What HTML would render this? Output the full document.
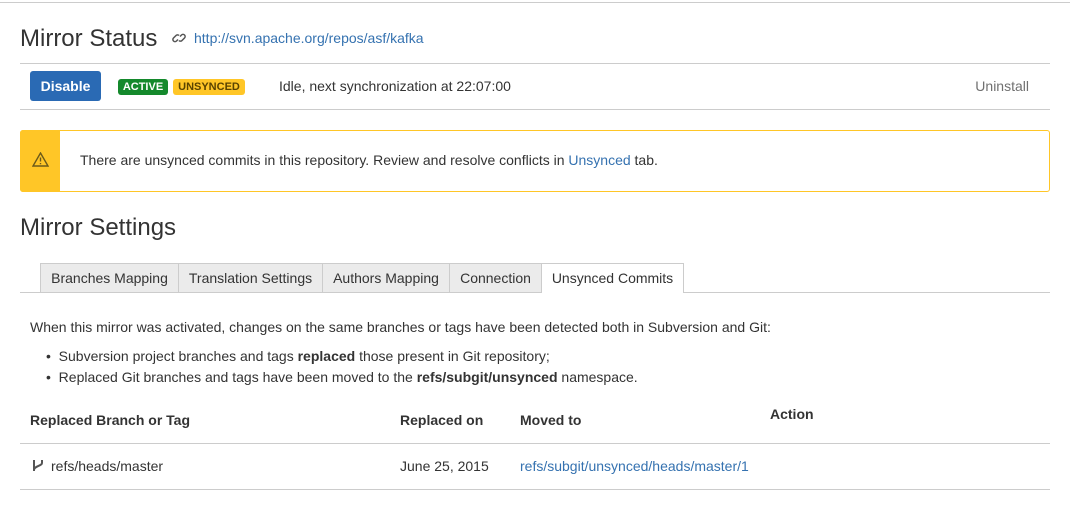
<!DOCTYPE html>
<html><head><style>
body{margin:0;width:1070px;height:516px;background:#fff;font-family:"Liberation Sans",Arial,sans-serif;color:#333;font-size:14px;position:relative;overflow:hidden}
.a{position:absolute;white-space:nowrap}
a{color:#3572b0;text-decoration:none}
.hr{position:absolute;height:1px;background:#ccc}
.tab{position:absolute;top:263px;height:29px;line-height:29px;background:#ebebeb;border:1px solid #ccc;border-bottom:none;text-align:center;box-sizing:border-box}
</style></head><body>
<div class="hr" style="left:0;right:0;top:2px;background:#ccc"></div>
<div class="a" style="left:20px;top:25px;font-size:24px;color:#333">Mirror Status</div>
<svg class="a" style="left:171px;top:30px" width="16" height="16" viewBox="0 0 16 16" fill="none" stroke="#555" stroke-width="1.5"><path d="M7 9.5l-1.5 1.5a2 2 0 0 1-3-3L5 5.5a2 2 0 0 1 3 0"/><path d="M9 6.5l1.5-1.5a2 2 0 0 1 3 3L11 10.5a2 2 0 0 1-3 0"/></svg>
<a class="a" style="left:194px;top:30px">http://svn.apache.org/repos/asf/kafka</a>
<div class="hr" style="left:20px;width:1030px;top:63px"></div>
<div class="a" style="left:30px;top:71px;width:71px;height:30px;background:#2a6ab4;border-radius:3px;color:#fff;font-weight:bold;text-align:center;line-height:30px">Disable</div>
<div class="a" style="left:118px;top:79px;width:50px;height:16px;background:#14892c;border-radius:3px;color:#fff;font-weight:bold;font-size:11px;text-align:center;line-height:16px">ACTIVE</div>
<div class="a" style="left:173px;top:79px;width:72px;height:16px;background:#ffc627;border-radius:3px;color:#594300;font-weight:bold;font-size:11px;text-align:center;line-height:16px">UNSYNCED</div>
<div class="a" style="left:279px;top:78px">Idle, next synchronization at 22:07:00</div>
<div class="a" style="right:41px;top:78px;color:#707070">Uninstall</div>
<div class="hr" style="left:20px;width:1030px;top:109px"></div>
<div class="a" style="left:20px;top:130px;width:1030px;height:62px;border:1px solid #ffc627;border-radius:3px;box-sizing:border-box"></div>
<div class="a" style="left:20px;top:130px;width:40px;height:62px;background:#ffc627;border-radius:3px 0 0 3px"></div>
<svg class="a" style="left:32px;top:152px" width="17" height="15" viewBox="0 0 17 15" fill="none" stroke="#6b5a1a" stroke-width="1.4"><path d="M8.5 1L16 14H1z"/><path d="M8.5 5.5v4M8.5 11v1.3"/></svg>
<div class="a" style="left:80px;top:152px">There are unsynced commits in this repository. Review and resolve conflicts in <a>Unsynced</a> tab.</div>
<div class="a" style="left:20px;top:214px;font-size:24px">Mirror Settings</div>
<div class="hr" style="left:20px;width:1030px;top:292px"></div>
<div class="tab" style="left:40px;width:139px">Branches Mapping</div>
<div class="tab" style="left:178px;width:145px">Translation Settings</div>
<div class="tab" style="left:322px;width:128px">Authors Mapping</div>
<div class="tab" style="left:449px;width:93px">Connection</div>
<div class="tab" style="left:541px;width:143px;background:#fff;height:30px">Unsynced Commits</div>
<div class="a" style="left:30px;top:319px">When this mirror was activated, changes on the same branches or tags have been detected both in Subversion and Git:</div>
<div class="a" style="left:46px;top:348px">•&nbsp;&nbsp;Subversion project branches and tags <b>replaced</b> those present in Git repository;</div>
<div class="a" style="left:46px;top:369px">•&nbsp;&nbsp;Replaced Git branches and tags have been moved to the <b>refs/subgit/unsynced</b> namespace.</div>
<div class="a" style="left:30px;top:412px;font-weight:bold">Replaced Branch or Tag</div>
<div class="a" style="left:400px;top:412px;font-weight:bold">Replaced on</div>
<div class="a" style="left:520px;top:412px;font-weight:bold">Moved to</div>
<div class="a" style="left:770px;top:406px;font-weight:bold">Action</div>
<div class="hr" style="left:20px;width:1030px;top:443px"></div>
<svg class="a" style="left:31px;top:458px" width="14" height="15" viewBox="0 0 14 15" fill="none" stroke="#555" stroke-width="2"><path d="M3 2v11M11 2v3c0 3-8 3-8 7"/></svg>
<div class="a" style="left:51px;top:458px">refs/heads/master</div>
<div class="a" style="left:400px;top:458px">June 25, 2015</div>
<a class="a" style="left:520px;top:458px">refs/subgit/unsynced/heads/master/1</a>
<div class="hr" style="left:20px;width:1030px;top:489px"></div>
</body></html>
